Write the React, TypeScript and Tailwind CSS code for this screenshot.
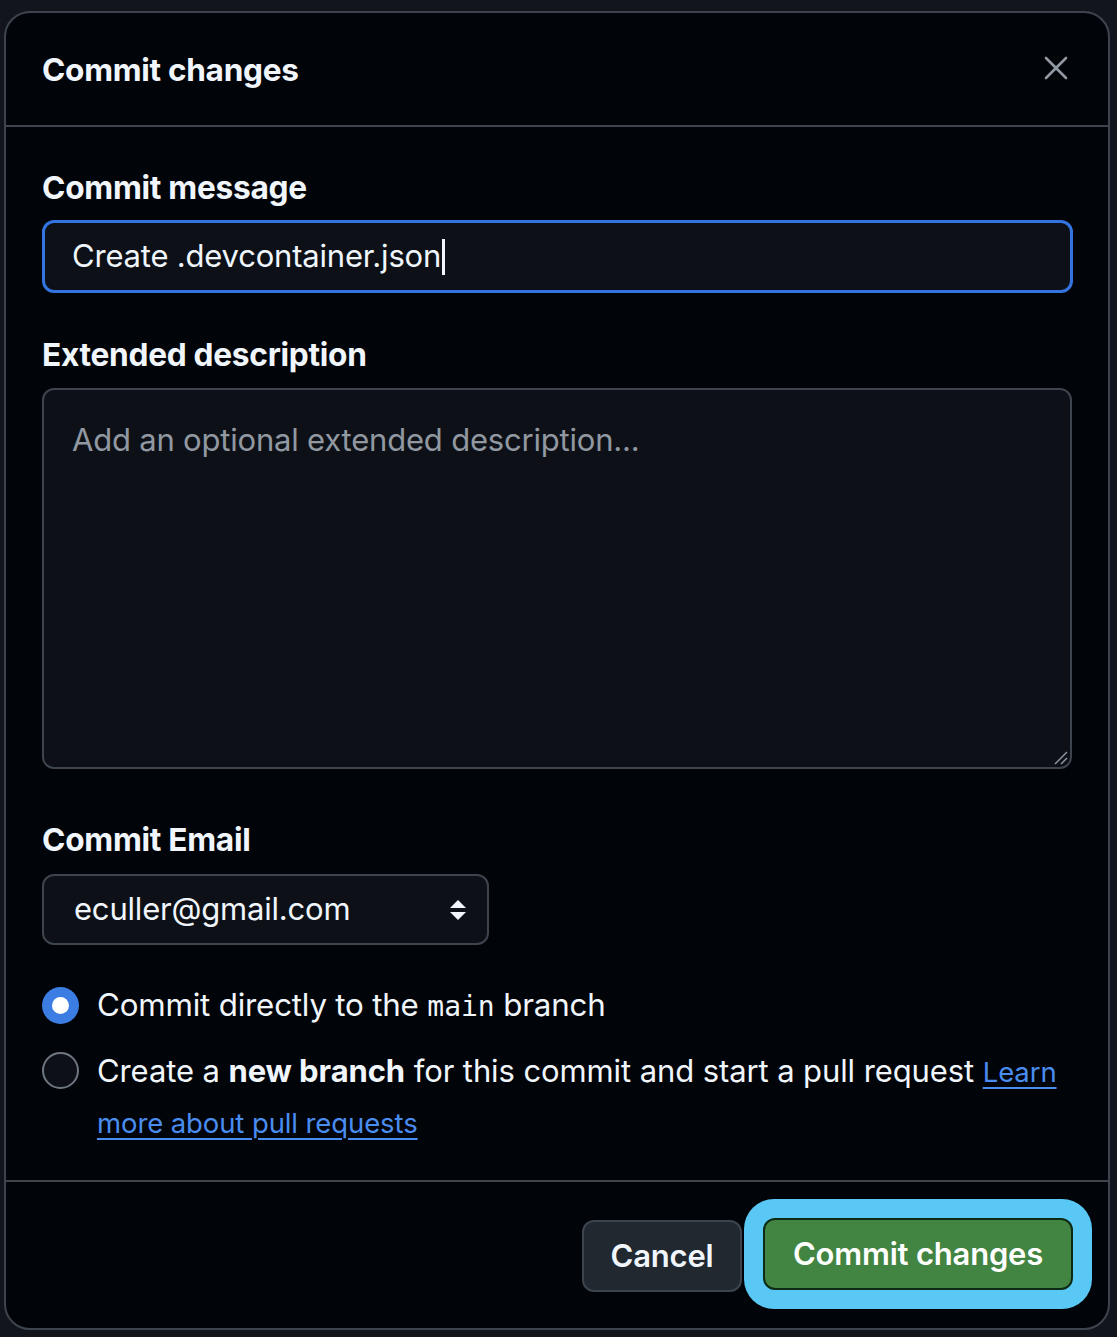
import React from "react";

export default function App() {
  return (
    <div
      className="w-[1117px] h-[1337px] bg-[#12161c] overflow-hidden pt-[11px] pl-[4px]"
      style={{ fontFamily: "Inter, 'Noto Sans', sans-serif" }}
    >
      <div className="w-[1106px] h-[1319px] bg-[#010409] border-2 border-[#3d444d] rounded-[26px] flex flex-col overflow-hidden">
        {/* Header */}
        <div className="h-[114px] shrink-0 flex items-center justify-between pl-[36px] pr-[40px] border-b-2 border-[#3d444d]">
          <h1 className="text-[31.6px] font-bold text-[#f0f6fc] tracking-[-0.3px] pt-[2px]">Commit changes</h1>
          <svg width="24" height="24" viewBox="0 0 24 24" className="mt-[-2px]">
            <path d="M2 2 L22 22 M22 2 L2 22" stroke="#9198a1" strokeWidth="2.6" strokeLinecap="round" />
          </svg>
        </div>

        {/* Body */}
        <div className="flex-1 flex flex-col px-[36px] pt-[41px]">
          <label className="h-[40px] flex items-center text-[31.7px] font-bold text-[#f0f6fc] tracking-[-0.3px]">
            Commit message
          </label>
          <div className="mt-[12px] h-[73px] w-[1031px] rounded-[12px] border-[3px] border-[#3474e0] bg-[#0d1117] flex items-center pl-[27px]">
            <span className="text-[31px] text-[#f0f6fc] tracking-[-0.2px]">Create .devcontainer.json</span>
            <span className="w-[3px] h-[36px] bg-[#f0f6fc] ml-[1px]" />
          </div>

          <label className="mt-[42px] h-[40px] flex items-center text-[31.7px] font-bold text-[#f0f6fc] tracking-[-0.3px]">
            Extended description
          </label>
          <div className="relative mt-[13px] h-[381px] w-[1030px] rounded-[12px] border-2 border-[#3d444d] bg-[#0d1117] pl-[28px] pt-[30px]">
            <span className="text-[31px] text-[#9198a1] tracking-[-0.2px] leading-[40px]">
              Add an optional extended description...
            </span>
            <svg width="16" height="16" viewBox="0 0 16 16" className="absolute right-[2px] bottom-[2px]">
              <path d="M15 3 L3 15 M15 9 L9 15" stroke="#8b949e" strokeWidth="1.5" />
            </svg>
          </div>

          <label className="mt-[51px] h-[40px] flex items-center text-[31.7px] font-bold text-[#f0f6fc] tracking-[-0.3px]">
            Commit Email
          </label>
          <div className="mt-[14px] h-[71px] w-[447px] rounded-[12px] border-2 border-[#3d444d] bg-[#0d1117] flex items-center justify-between pl-[30px] pr-[19px]">
            <span className="text-[31px] text-[#f0f6fc] tracking-[-0.2px]">eculler@gmail.com</span>
            <svg width="20" height="24" viewBox="0 0 20 24">
              <path d="M10 2 L18 10 L2 10 Z M10 22 L18 14 L2 14 Z" fill="#f0f6fc" />
            </svg>
          </div>

          {/* Radios */}
          <div className="mt-[35px] h-[50px] flex items-center">
            <div className="w-[37px] h-[37px] rounded-full bg-[#3b7de3] flex items-center justify-center shrink-0">
              <div className="w-[17px] h-[17px] rounded-full bg-white" />
            </div>
            <span className="ml-[18px] text-[31.3px] text-[#f0f6fc] tracking-[-0.2px]">
              Commit directly to the{" "}
              <span className="text-[28px] tracking-normal" style={{ fontFamily: "'DejaVu Sans Mono', 'Liberation Mono', monospace" }}>
                main
              </span>{" "}
              branch
            </span>
          </div>

          <div className="mt-[16px] flex items-start">
            <div className="mt-[6px] w-[37px] h-[37px] rounded-full border-2 border-[#6e7681] bg-[#0d1117] shrink-0" />
            <p className="ml-[18px] text-[31px] text-[#f0f6fc] leading-[49px] tracking-[-0.1px]">
              Create a <span className="font-bold">new branch</span> for this commit and start a pull request{" "}
              <a className="text-[27.5px] text-[#4a8df0] underline underline-offset-[5px] decoration-2">
                Learn more about pull requests
              </a>
            </p>
          </div>
        </div>

        {/* Footer */}
        <div className="h-[148px] shrink-0 border-t-2 border-[#3d444d] flex items-start justify-end pr-[35px] pt-[36px] gap-[21px]">
          <button className="mt-[2px] w-[160px] h-[72px] rounded-[12px] border-2 border-[#3d444d] bg-[#212830] text-[31px] font-semibold text-[#f0f6fc] tracking-[-0.2px]">
            Cancel
          </button>
          <button className="w-[310px] h-[72px] rounded-[12px] border-2 border-[#0c2a14] bg-[#428441] text-[31px] font-semibold text-white tracking-[-0.2px] shadow-[0_0_0_19px_#5ac8f5]">
            Commit changes
          </button>
        </div>
      </div>
    </div>
  );
}
